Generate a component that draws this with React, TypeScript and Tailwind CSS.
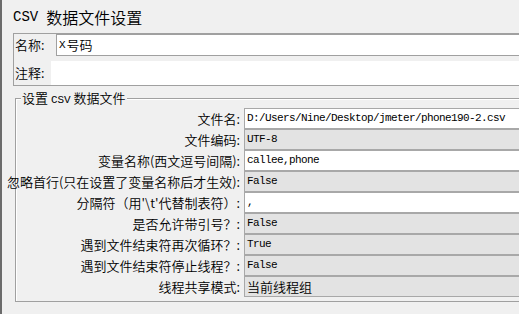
const cjk = "font-['Noto_Sans_CJK_SC',sans-serif] font-[350]";
const mono = "font-['Liberation_Mono','Noto_Sans_CJK_SC',monospace]";

interface Row {
    label: string;
    value: string;
    white?: boolean;
    cjkValue?: boolean;
}

const rows: Row[] = [
    { label: '文件名:', value: 'D:/Users/Nine/Desktop/jmeter/phone190-2.csv', white: true },
    { label: '文件编码:', value: 'UTF-8' },
    { label: '变量名称(西文逗号间隔):', value: 'callee,phone', white: true },
    { label: '忽略首行(只在设置了变量名称后才生效):', value: 'False' },
    { label: "分隔符（用'\\t'代替制表符）:", value: ',', white: true },
    { label: '是否允许带引号？:', value: 'False' },
    { label: '遇到文件结束符再次循环？:', value: 'True' },
    { label: '遇到文件结束符停止线程？:', value: 'False' },
    { label: '线程共享模式:', value: '当前线程组', cjkValue: true },
];

export default function App() {
    return (
        <div className="w-[519px] h-[314px] overflow-hidden bg-[#f0f0f0] border-l-2 border-[#6b6b6b] text-black">
            {/* title */}
            <div className={`h-[33px] pl-[11px] flex items-center text-[16px] leading-none ${cjk}`}>
                <span className={`${mono} text-[14px] mr-[8px]`}>CSV</span>
                <span>数据文件设置</span>
            </div>

            {/* name / comment */}
            <div className="ml-[11px] w-[540px] h-[53px] border border-r-0 border-[#a0a0a0] flex flex-col">
                <div className="flex h-[22px] pl-[1px]">
                    <div className={`w-[41px] flex items-center text-[13px] ${cjk}`}>名称:</div>
                    <div className="flex-1 bg-white border border-r-0 border-[#a0a0a0] flex items-center pl-[2px] text-[13px]">
                        <span className={`${mono} text-[11px] mr-[1px]`}>X</span>
                        <span className={cjk}>号码</span>
                    </div>
                </div>
                <div className="h-[5px]" />
                <div className="flex h-[24px] pl-[1px]">
                    <div className={`w-[36px] flex items-center text-[13px] ${cjk}`}>注释:</div>
                    <div className="flex-1 bg-white" />
                </div>
            </div>

            {/* csv group */}
            <div className="relative mt-[12px] ml-[13px] w-[540px] h-[204px] border border-r-0 border-[#a0a0a0] shadow-[inset_1px_1px_0_#ffffff] pt-[9px]">
                <div className={`absolute -top-[9px] left-[5px] px-[1px] bg-[#f0f0f0] text-[13px] leading-[16px] ${cjk}`}>
                    设置 <span className={`${mono} text-[11px]`}>CSV</span> 数据文件
                </div>
                {rows.map((r) => (
                    <div key={r.label} className="flex h-[21px]">
                        <div className={`w-[224px] shrink-0 flex justify-end items-center whitespace-nowrap text-[13px] ${cjk}`}>
                            {r.label}
                        </div>
                        <div
                            className={`ml-[4px] flex-1 border border-r-0 border-[#a8a8a8] flex items-center pl-[2px] whitespace-nowrap ${
                                r.white ? 'bg-white' : 'bg-[#e3e3e3]'
                            } ${r.cjkValue ? `${cjk} text-[13px]` : `${mono} text-[11px] tracking-[-0.6px]`}`}
                        >
                            {r.value}
                        </div>
                    </div>
                ))}
            </div>
        </div>
    );
}
